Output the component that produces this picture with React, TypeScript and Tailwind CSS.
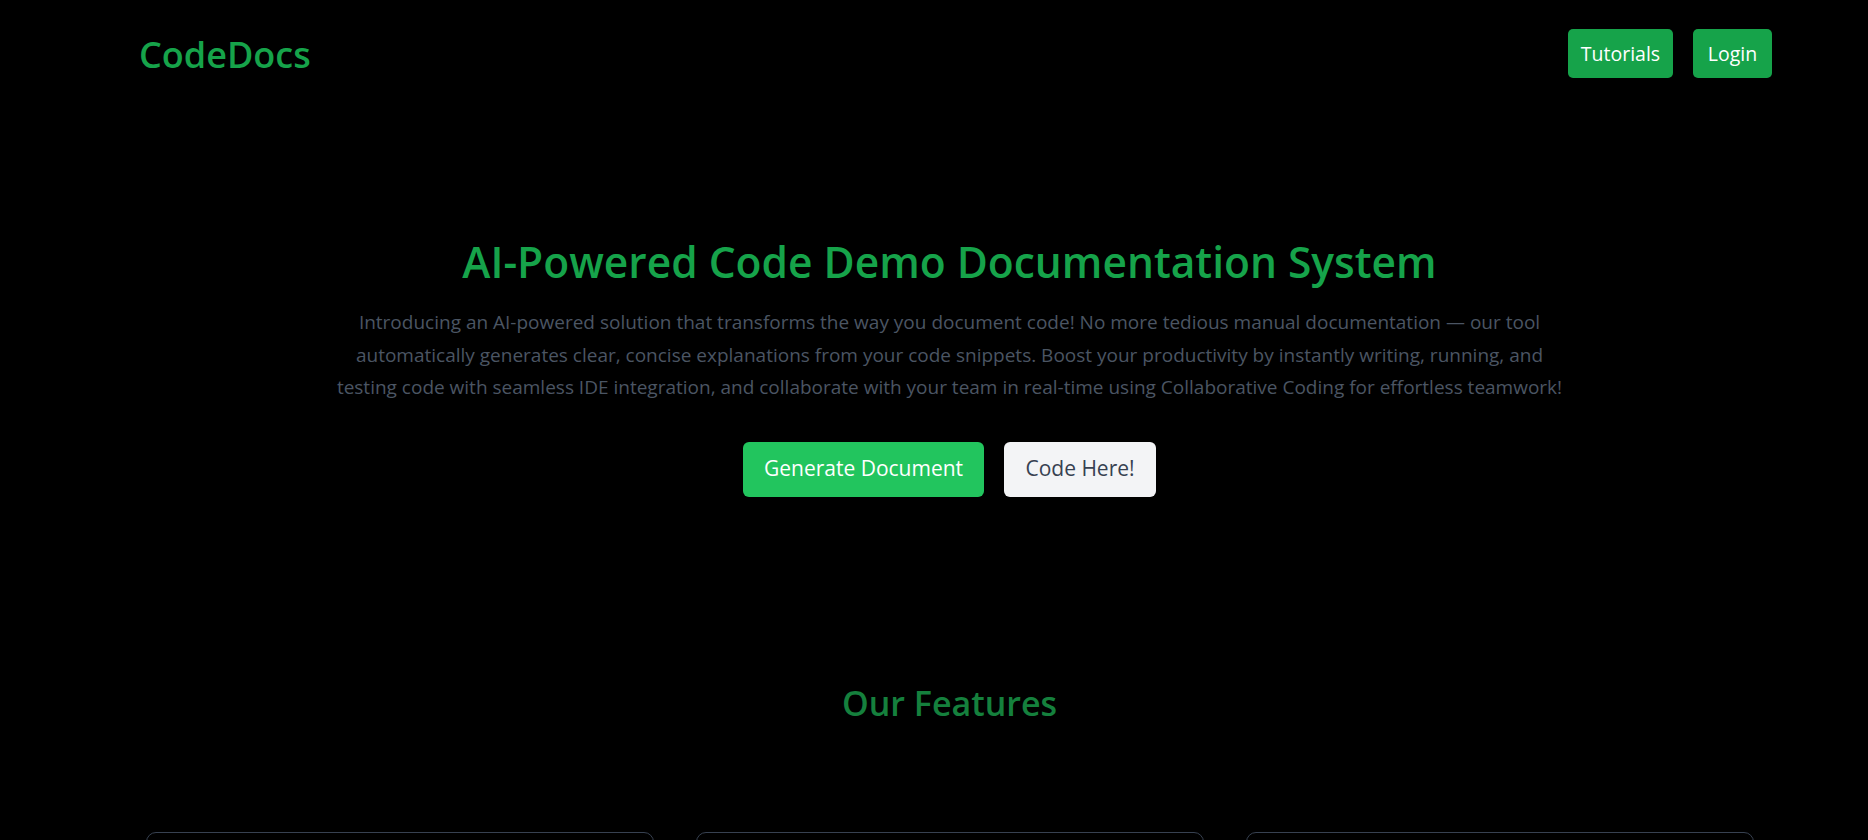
import { FileText, Code2, Users } from 'lucide-react'

const features = [
  {
    title: 'AI Documentation',
    description: 'Generate clear, concise explanations from your code snippets in seconds.',
    icon: FileText,
  },
  {
    title: 'IDE Integration',
    description: 'Write, run and test code without leaving the page.',
    icon: Code2,
  },
  {
    title: 'Collaborative Coding',
    description: 'Work with your team in real-time for effortless teamwork.',
    icon: Users,
  },
]

function Header() {
  return (
    <header className="flex items-center justify-between py-[28px] pl-[108px] pr-[96px]">
      <div className="pt-[2px] text-[36px] font-semibold leading-[49px] text-[#16a34a]">CodeDocs</div>
      <nav className="flex items-center gap-[20px]">
        <button className="h-[49px] w-[105px] rounded-[5px] bg-[#16a34a] text-[19.5px] text-white">
          Tutorials
        </button>
        <button className="h-[49px] w-[79px] rounded-[5px] bg-[#16a34a] text-[19.5px] text-white">
          Login
        </button>
      </nav>
    </header>
  )
}

function Hero() {
  return (
    <section className="flex flex-col items-center pt-[128px] text-center">
      <h1 className="text-[42.5px] font-semibold leading-[53px] text-[#16a34a]">
        AI-Powered Code Demo Documentation System
      </h1>
      <p className="mt-[18px] text-[19px] leading-[32.5px] text-[#4b5563]">
        Introducing an AI-powered solution that transforms the way you document code! No more tedious manual
        documentation — our tool
        <br />
        automatically generates clear, concise explanations from your code snippets. Boost your productivity by
        instantly writing, running, and
        <br />
        testing code with seamless IDE integration, and collaborate with your team in real-time using
        Collaborative Coding for effortless teamwork!
      </p>
      <div className="mt-[38px] flex gap-[20px]">
        <button className="h-[55px] w-[241px] rounded-[6px] bg-[#22c55e] text-[21px] text-white">
          Generate Document
        </button>
        <button className="h-[55px] w-[152px] rounded-[6px] bg-[#f3f4f6] text-[21px] text-[#374151]">
          Code Here!
        </button>
      </div>
    </section>
  )
}

function Features() {
  return (
    <section className="pt-[184px]">
      <h2 className="text-center text-[34px] font-semibold leading-[45px] text-[#15803d]">Our Features</h2>
      <div className="mx-auto mt-[106px] grid w-[1608px] grid-cols-3 gap-[42px]">
        {features.map((feature) => (
          <div
            key={feature.title}
            className="h-[260px] rounded-[10px] border border-[#374151] bg-black p-[30px]"
          >
            <feature.icon className="h-8 w-8 text-[#22c55e]" strokeWidth={1.8} />
            <div className="mt-4 text-[24px] text-[#16a34a]">{feature.title}</div>
            <p className="mt-2 text-[18px] leading-7 text-[#4b5563]">{feature.description}</p>
          </div>
        ))}
      </div>
    </section>
  )
}

export default function App() {
  return (
    <div className="min-h-screen overflow-hidden bg-black pl-[31px] font-['Open_Sans',sans-serif]">
      <Header />
      <Hero />
      <Features />
    </div>
  )
}
